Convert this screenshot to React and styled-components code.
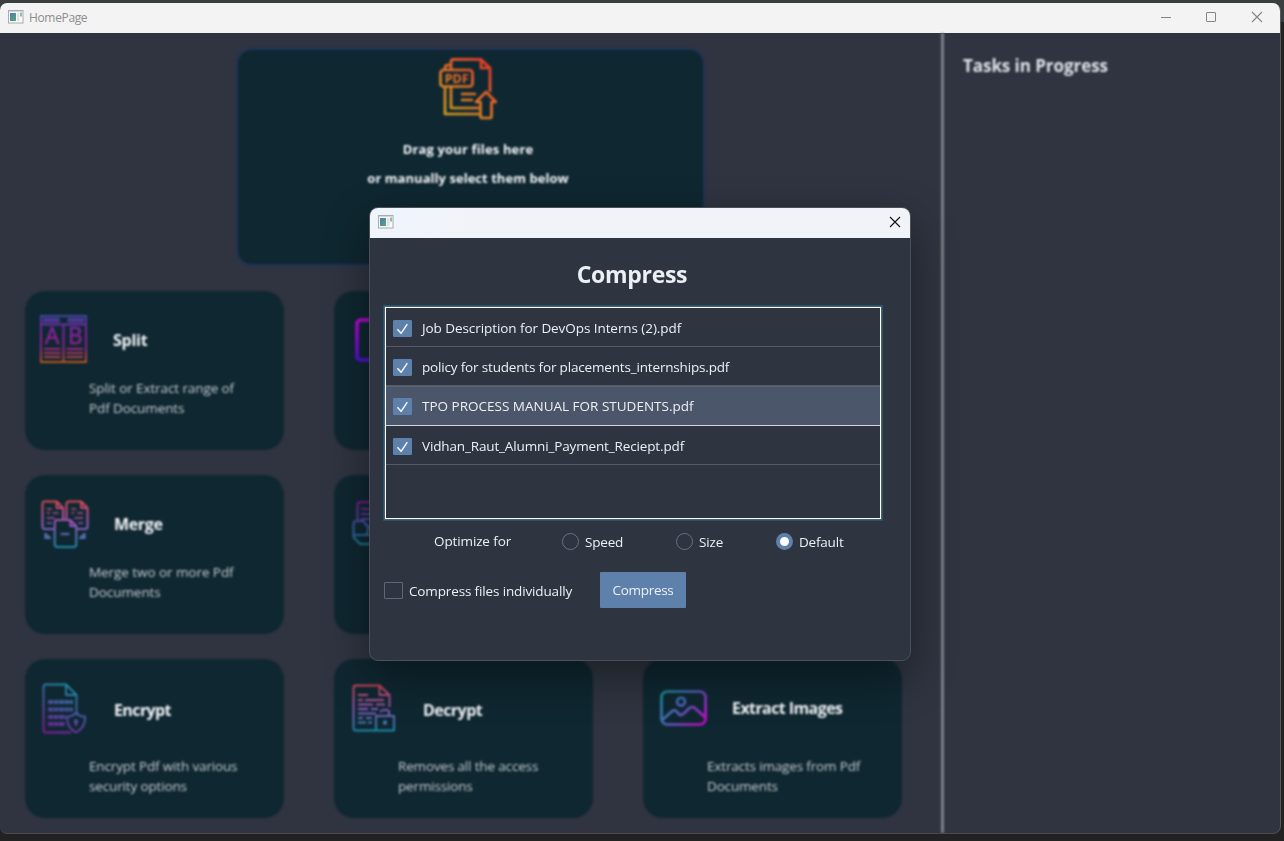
import React from 'react';
import styled, { createGlobalStyle } from 'styled-components';

const Global = createGlobalStyle`
  * { box-sizing: border-box; }
  body { margin: 0; overflow: hidden; background: #222; font-family: 'Open Sans', 'Noto Sans', sans-serif; }
  svg { display: block; flex: none; }
`;

const Desktop = styled.div`
  position: relative;
  width: 1284px;
  height: 841px;
  padding-top: 3px;
  background: linear-gradient(#3a3e3f 0 22px, #222 22px);
`;
const Window = styled.div`
  width: 1281px;
  height: 831px;
  display: flex;
  flex-direction: column;
  border-right: 1px solid #55585c;
  border-bottom: 1px solid #4b4b4c;
  border-radius: 7px 8px 8px 7px;
  overflow: hidden;
  background: #2f3440;
`;
const WindowBar = styled.header`
  flex: none;
  height: 30px;
  display: flex;
  align-items: center;
  padding: 0 17px 2px 8px;
  background: #f3f3f3;
`;
const WindowName = styled.span`
  flex: 1;
  margin-left: 5px;
  font-size: 12px;
  letter-spacing: -0.35px;
  color: #8d8d8d;
`;
const WindowControls = styled.div`
  display: flex;
  gap: 35px;
  margin-top: -1px;
`;
const Scene = styled.main`
  flex: 1;
  display: flex;
  filter: blur(1.1px);
  color: #f4f6fa;
`;
const Actions = styled.section`
  width: 941px;
  padding: 15px 0 0 25px;
`;
const Splitter = styled.div`
  width: 3px;
  background: #7d8088;
`;
const Tasks = styled.aside`
  flex: 1;
  padding: 20px 19px;
`;
const TasksTitle = styled.h2`
  margin: 0;
  font-size: 17px;
  line-height: 26px;
  letter-spacing: ${p => p.$track}px;
  color: #dfe2e8;
`;
const DropZone = styled.div`
  width: 469px;
  height: 218px;
  margin-left: 211px;
  padding: 8px 5px 0 0;
  display: flex;
  flex-direction: column;
  align-items: center;
  border: 2px solid #1f3459;
  border-radius: 16px;
  background: #0f2731;
`;
const DropText = styled.p`
  margin: ${p => p.$top}px 0 0;
  font-size: 13px;
  line-height: 20px;
  font-weight: 700;
  letter-spacing: ${p => p.$track}px;
`;
const CardGrid = styled.div`
  display: grid;
  grid-template-columns: repeat(3, 259px);
  grid-auto-rows: 159px;
  gap: 25px 50px;
  margin-top: 25px;
`;
const Card = styled.article`
  border-radius: 20px;
  background: #0f2731;
`;
const CardHead = styled.div`
  height: ${p => p.$height}px;
  display: flex;
  align-items: center;
`;
const CardTitle = styled.h3`
  margin: ${p => p.$drop}px 0 0;
  font-size: 16px;
  line-height: 22px;
  letter-spacing: ${p => p.$track}px;
`;
const CardText = styled.p`
  margin: 0 0 0 64px;
  font-size: 13.5px;
  line-height: 20px;
  letter-spacing: ${p => p.$track}px;
  color: #c3cbcf;
  white-space: pre-line;
`;
const IconSlot = styled.div`
  width: ${p => 73 + p.$titleInset}px;
  margin-left: 15px;
  padding: ${p => p.$drop}px 0 0 ${p => p.$inset}px;
`;

const Dialog = styled.div`
  position: absolute;
  left: 369px;
  top: 207px;
  width: 542px;
  height: 454px;
  border: 1px solid #4c4f55;
  border-radius: 9px;
  overflow: hidden;
  background: #2e3440;
  color: #eceff4;
  box-shadow: 0 16px 44px rgba(0, 0, 0, 0.4);
`;
const DialogBar = styled.header`
  height: 30px;
  display: flex;
  justify-content: space-between;
  align-items: center;
  padding: 0 9px 2px 8px;
  background: linear-gradient(90deg, #eff4fd, #f1f3f8 18%);
`;
const DialogTitle = styled.h1`
  margin: 20px 16px 0 0;
  text-align: center;
  font-size: 23px;
  line-height: 32px;
  letter-spacing: ${p => p.$track}px;
`;
const FileList = styled.div`
  width: 496px;
  height: 212px;
  margin: 17px 0 0 15px;
  border: 1px solid #fff;
  box-shadow: 0 0 0 1px #4a6373, 0 0 0 2px #1d566e;
`;
const FileRow = styled.label`
  height: ${p => (p.$selected ? 40 : 39)}px;
  display: flex;
  align-items: center;
  padding: ${p => (p.$selected ? 1 : 2)}px 0 0 7px;
  border-bottom: 1px solid ${p => (p.$selected ? '#d0d3d9' : '#555b69')};
  box-shadow: ${p => (p.$selected ? 'inset 0 1px #5a6374' : 'none')};
  background: ${p => (p.$selected ? '#4c566a' : 'transparent')};
`;
const CheckBox = styled.span`
  width: 19px;
  height: 17px;
  flex: none;
  display: flex;
  align-items: center;
  justify-content: center;
  border: 1px solid ${p => (p.$on ? '#5e81ac' : '#5f6676')};
  border-radius: 1px;
  background: ${p => (p.$on ? '#5e81ac' : 'transparent')};
`;
const Label = styled.span`
  margin-left: ${p => p.$gap}px;
  margin-top: ${p => p.$drop || 0}px;
  font-size: 13.5px;
  line-height: 18px;
  letter-spacing: ${p => p.$track}px;
  white-space: nowrap;
`;
const OptionRow = styled.div`
  display: flex;
  align-items: center;
  height: 17px;
  margin-top: 14px;
  padding-left: 64px;
`;
const OptionName = styled.span`
  width: 128px;
  margin-top: -1px;
  font-size: 13.5px;
  letter-spacing: ${p => p.$track}px;
`;
const Option = styled.label`
  width: ${p => p.$width}px;
  display: flex;
  align-items: center;
`;
const Radio = styled.span`
  width: 17px;
  height: 17px;
  flex: none;
  border-radius: 50%;
  border: ${p => (p.$on ? '4px solid #5e81ac' : '1px solid #6a7181')};
  background: ${p => (p.$on ? '#fff' : 'transparent')};
`;
const SubmitRow = styled.div`
  display: flex;
  align-items: center;
  height: 36px;
  margin-top: 22px;
  padding-left: 14px;
`;
const Toggle = styled.label`
  width: 216px;
  display: flex;
  align-items: center;
`;
const Submit = styled.button`
  width: 86px;
  height: 36px;
  padding: 0;
  border: 0;
  border-radius: 1px;
  background: #5e81ac;
  color: #eceff4;
  font: 13.5px 'Open Sans', sans-serif;
  letter-spacing: ${p => p.$track}px;
`;

const Gradient = ({ id, stops, x2 = 0, y2 = 1, x1 = 0, y1 = 0, size = 50 }) => (
  <defs>
    <linearGradient id={id} gradientUnits="userSpaceOnUse" x1={x1 * size} y1={y1 * size} x2={x2 * size} y2={y2 * size}>
      {stops.map((c, i) => <stop key={c} offset={i / (stops.length - 1)} stopColor={c} />)}
    </linearGradient>
  </defs>
);

const AppIcon = () => (
  <svg width="16" height="14" viewBox="0 0 16 14">
    <defs><linearGradient id="pane" x2="1" y2="1"><stop stopColor="#4b79b5" /><stop offset="1" stopColor="#57a878" /></linearGradient></defs>
    <rect x=".5" y=".5" width="14.5" height="12.5" fill="#fafafa" stroke="#a8acae" />
    <path d="M1 1.5h14" stroke="#d3d6d7" />
    <rect x="2" y="3" width="6" height="8" fill="url(#pane)" />
    <rect x="9" y="3" width="2.5" height="8" fill="#e1e3e4" />
    <rect x="12" y="2.5" width="2" height="4" fill="#8cbdb0" />
  </svg>
);
const CloseIcon = ({ color }) => (
  <svg width="12" height="12" viewBox="0 0 12 12" stroke={color} strokeWidth="1.1"><path d="M1 1l10 10M11 1L1 11" /></svg>
);
const Tick = () => (
  <svg width="13" height="12" viewBox="0 0 13 12" fill="none" stroke="#f3f6fa" strokeWidth="1.5"><path d="M1.4 7.3l3.700 4L11.300 2.200" /></svg>
);

const UploadIcon = () => (
  <svg width="58" height="62" viewBox="0 0 58 62" fill="none" stroke="url(#up)" strokeWidth="2.7" strokeLinejoin="round">
    <Gradient id="up" size={58} x1={0.9} y1={0.1} x2={0.1} y2={1} stops={['#e8392a', '#e27026', '#cfa31f']} />
    <path d="M12 11V4q0-2.600 2.600-2.600H42L51 10V34M42 1.400V10H51M12 7H9q-3 0-3 3v2M12 29V50H40M6 29V56H40" />
    <rect x="1.500" y="12" width="32" height="16.500" rx="3" />
    <text x="5.500" y="25" fontFamily="Open Sans" fontSize="13" fontWeight="700" textLength="24" lengthAdjust="spacingAndGlyphs" fill="url(#up)" stroke="none">PDF</text>
    <path d="M22 36H37M22 42H34M47 34L57 44H52.500V58q0 2-2 2H43.500q-2 0-2-2V44H37z" />
  </svg>
);
const SplitIcon = () => (
  <svg width="47" height="48" viewBox="0 0 48 48" preserveAspectRatio="none" fill="none" stroke="url(#sp)" strokeWidth="1.900">
    <Gradient id="sp" size={48} stops={['#3c4ba0', '#8a1fa3', '#97208c', '#ba5a19']} />
    <path d="M1 1H47V47H1zM1 9.500H47M24 9.500V47M3 4H20M28 4H45M3 6.500H20M28 6.500H45M4 34H21M27 34H44M4 38H21M27 38H44M4 42H21M27 42H44" />
    <g fontFamily="Open Sans" fontSize="23" strokeWidth=".5" fill="url(#sp)"><text x="5" y="29.500">A</text><text x="28.500" y="29.500">B</text></g>
  </svg>
);
const MergeIcon = () => (
  <svg width="48" height="48" viewBox="0 0 49 48" preserveAspectRatio="none" fill="none" stroke="url(#mg)" strokeWidth="2.100" strokeLinejoin="round">
    <Gradient id="mg" size={48} stops={['#d94750', '#9a55bd', '#188aa3']} />
    <path d="M13 29H4q-2.500 0-2.500-2.500V4Q1.500 1.500 4 1.500H16L22.500 8V20M16 2V8H22M36 29H45q2.500 0 2.500-2.500V8L41 1.500H29Q26 1.500 26 4V20M41 2V8H47" />
    <path d="M6 9h5M6 13h3M12 13h6M6 18h8M6 23h5M31 9h5M31 13h3M37 13h6M34 18h9M38 23h5" strokeWidth="1.700" />
    <path d="M16 20H30L36 26V44q0 3-3 3H17q-3 0-3-3V23q0-3 2-3zM30 20V26H36M20 34H29M4.500 33v5H10M4.500 34l4 3M44.500 33v5H39M44.500 34l-4 3" />
  </svg>
);
const EncryptIcon = () => (
  <svg width="46" height="51" viewBox="0 0 46 51" fill="none" stroke="url(#en)" strokeWidth="1.800" strokeLinejoin="round">
    <Gradient id="en" x1={0.7} x2={0.2} stops={['#129ba0', '#4e5aa9', '#8b18a0']} />
    <path d="M31 49.500H6q-2.500 0-2.500-2.500V4Q3.500 1.500 6 1.500H26L36.500 12V30M26 2V12H36" />
    <path d="M8 19H33M8 26.500H33M8 34H26M8 41H25" strokeWidth="4" strokeDasharray="5 .5" opacity=".85" />
    <path d="M36 30Q40 34 45 33.500Q46 44 36 49.500Q26 44 27.500 33.500Q32 34 36 30zM36 38v5" />
    <circle cx="36" cy="38.500" r="1.300" />
  </svg>
);
const DecryptIcon = () => (
  <svg width="43" height="48" viewBox="0 0 43 48" fill="none" stroke="url(#de)" strokeWidth="1.900" strokeLinejoin="round">
    <Gradient id="de" size={48} stops={['#d6424e', '#9655b9', '#138ca9']} />
    <path d="M24 46.500H4q-2.500 0-2.500-2.500V4Q1.500 1.500 4 1.500H27.500L37.500 11V23M27.500 2V11H37" />
    <path d="M6 11H16M6 16h5M13 16H32M6 20.500H21M24 20.500H33M6 25H16M19 25H26M6 29.500H24M6 34h5M14 34h6M6 38.500H14M16 38.500h4" />
    <path d="M24 32H42V46.500H24zM28 28q4-4 9-1v5M33 37v4" />
    <circle cx="33" cy="38.500" r="1.200" />
  </svg>
);
const ImageIcon = () => (
  <svg width="47" height="36" viewBox="0 0 48 37" preserveAspectRatio="none" fill="none" stroke="url(#im)" strokeWidth="2.700" strokeLinejoin="round">
    <Gradient id="im" size={48} x2={0.9} y2={0.75} stops={['#0e9599', '#5363bc', '#c808cb']} />
    <rect x="1.500" y="1.500" width="45" height="34" rx="6" />
    <circle cx="21.500" cy="12" r="4" />
    <path d="M2 31L12 22q2.500-2 5 0l2.500 3q2 1.500 4.500-.500L30 18.500q3-2 5.500 0L46 28" />
  </svg>
);
const FrameIcon = () => (
  <svg width="48" height="44" viewBox="0 0 48 44" fill="none" stroke="url(#fr)" strokeWidth="3.700">
    <Gradient id="fr" size={44} stops={['#c505d6', '#500fd2']} />
    <rect x="8" y="2" width="38" height="40" rx="4" />
  </svg>
);
const ConvertIcon = () => (
  <svg width="48" height="46" viewBox="0 0 48 46" fill="none" stroke="url(#cv)" strokeWidth="2">
    <Gradient id="cv" size={46} stops={['#85148f', '#4254a6', '#137f91']} />
    <path d="M5.500 20V4q0-3 3-3H38V20M9 8H36M9 13H36M9 18H36M1.500 23q0-3 3-3H11L16 26H45M1.500 23V36L8 43H45M1.500 34H45M13 22q6 5 1 12" />
  </svg>
);

const cards = [
  { title: 'Split', text: 'Split or Extract range of\nPdf Documents', Icon: SplitIcon, drop: 11, iconDrop: 8, height: 87, titleTrack: -0.25, track: -0.1 },
  { Icon: FrameIcon, height: 87, iconDrop: 11 },
  {},
  { title: 'Merge', text: 'Merge two or more Pdf\nDocuments', Icon: MergeIcon, drop: 11, iconDrop: 10, height: 87, inset: 1, titleInset: 1, titleTrack: -0.35, track: -0.06 },
  { Icon: ConvertIcon, height: 87, iconDrop: 10, inset: 3 },
  {},
  { title: 'Encrypt', text: 'Encrypt Pdf with various\nsecurity options', Icon: EncryptIcon, drop: 5, iconDrop: 1, height: 97, titleInset: 1, titleTrack: -0.6, track: -0.15 },
  { title: 'Decrypt', text: 'Removes all the access\npermissions', Icon: DecryptIcon, drop: 5, iconDrop: 0, height: 97, inset: 3, titleInset: 1, titleTrack: -0.55, track: -0.16 },
  { title: 'Extract Images', text: 'Extracts images from Pdf\nDocuments', Icon: ImageIcon, drop: 0, iconDrop: 0, height: 97, inset: 1.5, titleInset: 1, titleTrack: -0.58, track: -0.16 },
];

const files = [
  { name: 'Job Description for DevOps Interns (2).pdf', track: -0.07 },
  { name: 'policy for students for placements_internships.pdf', track: -0.17 },
  { name: 'TPO PROCESS MANUAL FOR STUDENTS.pdf', track: 0, selected: true },
  { name: 'Vidhan_Raut_Alumni_Payment_Reciept.pdf', track: -0.14 },
];

export default function App() {
  return (
    <Desktop>
      <Global />
      <Window>
        <WindowBar>
          <AppIcon />
          <WindowName>HomePage</WindowName>
          <WindowControls>
            <svg width="10" height="12" viewBox="0 0 10 12" stroke="#858585"><path d="M0 6.500H10" /></svg>
            <svg width="10" height="12" viewBox="0 0 10 12" fill="none" stroke="#858585"><rect x=".5" y="1.500" width="9" height="9" rx=".5" /></svg>
            <CloseIcon color="#858585" />
          </WindowControls>
        </WindowBar>
        <Scene>
          <Actions>
            <DropZone>
              <UploadIcon />
              <DropText $top={19} $track={0.15}>Drag your files here</DropText>
              <DropText $top={9} $track={0.04}>or manually select them below</DropText>
            </DropZone>
            <CardGrid>
              {cards.map(({ title, text, Icon, drop, iconDrop, height, inset = 0, titleInset = 0, titleTrack, track }, i) => (
                <Card key={i}>
                  {Icon && (
                    <CardHead $height={height}>
                      <IconSlot $drop={iconDrop} $inset={inset} $titleInset={titleInset}><Icon /></IconSlot>
                      {title && <CardTitle $drop={drop} $track={titleTrack}>{title}</CardTitle>}
                    </CardHead>
                  )}
                  {text && <CardText $track={track}>{text}</CardText>}
                </Card>
              ))}
            </CardGrid>
          </Actions>
          <Splitter />
          <Tasks><TasksTitle $track={-0.06}>Tasks in Progress</TasksTitle></Tasks>
        </Scene>
      </Window>

      <Dialog>
        <DialogBar><AppIcon /><CloseIcon color="#111" /></DialogBar>
        <DialogTitle $track={-0.3}>Compress</DialogTitle>
        <FileList>
          {files.map(f => (
            <FileRow key={f.name} $selected={f.selected}>
              <CheckBox $on><Tick /></CheckBox>
              <Label $gap={10} $track={f.track}>{f.name}</Label>
            </FileRow>
          ))}
        </FileList>
        <OptionRow>
          <OptionName $track={-0.12}>Optimize for</OptionName>
          <Option $width={114}><Radio /><Label $gap={6} $drop={1} $track={-0.2}>Speed</Label></Option>
          <Option $width={100}><Radio /><Label $gap={6} $drop={1} $track={-0.15}>Size</Label></Option>
          <Option $width={90}><Radio $on /><Label $gap={6} $drop={1} $track={-0.2}>Default</Label></Option>
        </OptionRow>
        <SubmitRow>
          <Toggle><CheckBox /><Label $gap={6} $drop={1} $track={-0.14}>Compress files individually</Label></Toggle>
          <Submit $track={-0.3}>Compress</Submit>
        </SubmitRow>
      </Dialog>
    </Desktop>
  );
}
